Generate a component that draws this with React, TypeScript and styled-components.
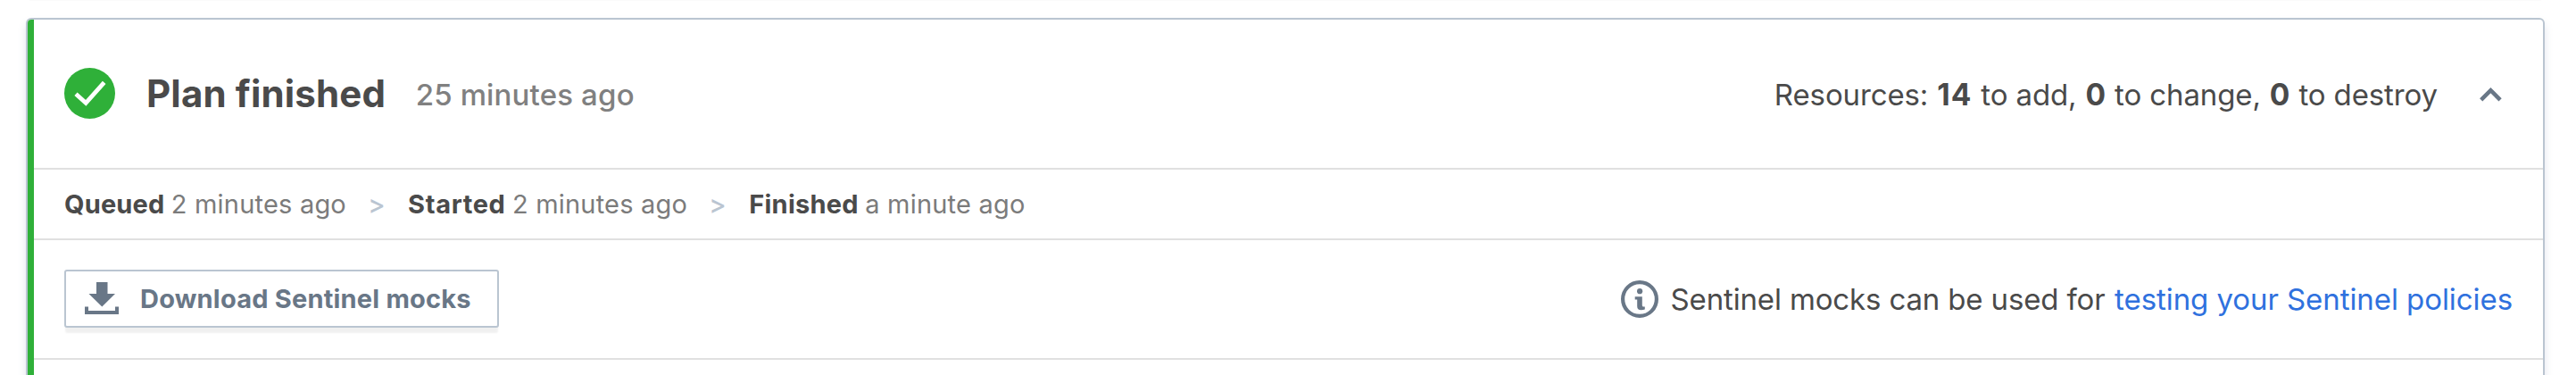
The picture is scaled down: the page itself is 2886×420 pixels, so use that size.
import React from 'react';
import styled, { createGlobalStyle } from 'styled-components';

const color = {
  text: '#4a4a4a',
  muted: '#7b7b7b',
  slate: '#697787',
  outline: '#bac5d1',
  rule: '#e0e0e0',
  green: '#2fb039',
  link: '#2f71de',
};

const GlobalStyle = createGlobalStyle`
  * { box-sizing: border-box; }
  body {
    margin: 0;
    background: #fff;
    color: ${color.text};
    font-family: Inter, "Liberation Sans", sans-serif;
  }
`;

const Page = styled.main`
  height: 420px;
  overflow: hidden;
  padding: 0 35px 0 29px;
`;

const PreviousCardShadow = styled.div`
  height: 1px;
  margin: 0 4px 19px;
  background: #fbfbfb;
`;

const Card = styled.section`
  height: 460px;
  display: flex;
  border: 2px solid ${color.outline};
  border-radius: 6px;
  box-shadow: 0 6px 10px rgba(110, 130, 170, 0.2);
`;

const StatusBar = styled.div`
  flex: none;
  width: 7px;
  border-radius: 4px 0 0 4px;
  background: ${color.green};
`;

const CardBody = styled.div`
  flex: 1;
  min-width: 0;
`;

const Section = styled.div<{ $height: number; $right: number; $bottom?: number }>`
  height: ${(p) => p.$height}px;
  padding: 0 ${(p) => p.$right}px ${(p) => p.$bottom ?? 0}px 34px;
  display: flex;
  align-items: center;
  white-space: nowrap;
  border-bottom: 2px solid ${color.rule};
`;

const Icon = styled.svg<{ $top?: number; $bottom?: number }>`
  flex: none;
  display: block;
  overflow: visible;
  margin-top: ${(p) => p.$top ?? 0}px;
  margin-bottom: ${(p) => p.$bottom ?? 0}px;
`;

const Title = styled.h2`
  margin: 0 33.6px 0 35px;
  font-size: 42px;
  line-height: 50px;
  font-weight: 700;
  letter-spacing: 0.14px;
`;

const TitleTime = styled.span`
  padding-top: 2px;
  font-size: 33px;
  line-height: 40px;
  font-weight: 500;
  letter-spacing: 0.16px;
  color: #808080;
`;

const Resources = styled.div`
  margin: 0 47px 0 auto;
  padding-top: 2px;
  display: flex;
  align-items: baseline;
  gap: 10px;
  font-size: 33px;
  line-height: 40px;
  letter-spacing: -0.12px;
`;

const Count = styled.strong<{ $spacing?: number }>`
  font-size: 33.5px;
  font-weight: 700;
  letter-spacing: ${(p) => p.$spacing ?? 0}px;
`;

const Step = styled.span`
  display: flex;
  align-items: baseline;
  gap: 7.4px;
  font-size: 29px;
  line-height: 36px;
  letter-spacing: 0.2px;
  color: ${color.muted};
`;

const StepName = styled.strong<{ $spacing: number }>`
  font-weight: 700;
  letter-spacing: ${(p) => p.$spacing}px;
  color: ${color.text};
`;

const StepArrow = styled.span`
  margin: 0 25.6px 0 24.2px;
  font-size: 29px;
  line-height: 36px;
  font-weight: 500;
  color: ${color.outline};
`;

const DownloadButton = styled.button`
  width: 487px;
  height: 65px;
  padding: 0 0 0 21px;
  display: flex;
  align-items: center;
  gap: 24px;
  border: 2px solid ${color.outline};
  border-radius: 3px;
  background: #fff;
  box-shadow: 0 7px 2px -1px rgba(0, 0, 0, 0.06);
  color: ${color.slate};
  font-family: inherit;
  font-size: 29px;
  font-weight: 700;
  letter-spacing: 0.2px;
`;

const Hint = styled.div`
  margin-left: auto;
  display: flex;
  align-items: center;
  font-size: 33px;
  line-height: 40px;
  letter-spacing: -0.15px;
`;

const HintText = styled.span`
  margin: 0 10.6px 0 14px;
`;

const HintLink = styled.a`
  color: ${color.link};
  letter-spacing: -0.07px;
  text-decoration: none;
`;

const CheckIcon = () => (
  <Icon $bottom={1} width="57" height="57" viewBox="0 0 57 57">
    <circle cx="28.5" cy="28.5" r="28.5" fill={color.green} />
    <path d="M13 29.3 24.2 39.4 44.7 16.4" fill="none" stroke="#fff" strokeWidth="4.8" />
  </Icon>
);

const ChevronUp = () => (
  <Icon $top={2} width="25" height="16" viewBox="0 0 25 16">
    <path d="M1.7 13.8 12.4 3.1 23.1 13.8" fill="none" stroke={color.slate} strokeWidth="4.5" />
  </Icon>
);

const DownloadIcon = () => (
  <Icon $bottom={1} width="38" height="36" viewBox="0 0 38 36">
    <path
      d="M13 0H25.5V13H34L19.3 27.5 4.5 13H13ZM0 27.5H4V32H34V27.5H38V36H0Z"
      fill={color.slate}
    />
  </Icon>
);

const InfoIcon = () => (
  <Icon width="42" height="42" viewBox="0 0 42 42">
    <circle cx="21" cy="21" r="18.9" fill="none" stroke={color.slate} strokeWidth="4.2" />
    <circle cx="21.1" cy="12.2" r="3.1" fill={color.slate} />
    <path
      d="M15.7 18.2H23.8V28Q23.8 29.6 25.4 29.6H26.8V32.6Q25.2 33.3 22.6 33.3 18.2 33.3 18.2 29V21.4H15.7Z"
      fill={color.slate}
    />
  </Icon>
);

export default function App() {
  return (
    <>
      <GlobalStyle />
      <Page>
        <PreviousCardShadow />
        <Card>
          <StatusBar />
          <CardBody>
            <Section $height={168} $right={46}>
              <CheckIcon />
              <Title>Plan finished</Title>
              <TitleTime>25 minutes ago</TitleTime>
              <Resources>
                <span>Resources:</span>
                <Count $spacing={1}>14</Count>
                <span>to add,</span>
                <Count>0</Count>
                <span>to change,</span>
                <Count>0</Count>
                <span>to destroy</span>
              </Resources>
              <ChevronUp />
            </Section>
            <Section $height={79} $right={34}>
              <Step>
                <StepName $spacing={0.15}>Queued</StepName>
                <span>2 minutes ago</span>
              </Step>
              <StepArrow>&gt;</StepArrow>
              <Step>
                <StepName $spacing={0.65}>Started</StepName>
                <span>2 minutes ago</span>
              </Step>
              <StepArrow>&gt;</StepArrow>
              <Step>
                <StepName $spacing={0.25}>Finished</StepName>
                <span>a minute ago</span>
              </Step>
            </Section>
            <Section $height={134} $right={34} $bottom={1}>
              <DownloadButton type="button">
                <DownloadIcon />
                Download Sentinel mocks
              </DownloadButton>
              <Hint>
                <InfoIcon />
                <HintText>Sentinel mocks can be used for</HintText>
                <HintLink href="#">testing your Sentinel policies</HintLink>
              </Hint>
            </Section>
          </CardBody>
        </Card>
      </Page>
    </>
  );
}
